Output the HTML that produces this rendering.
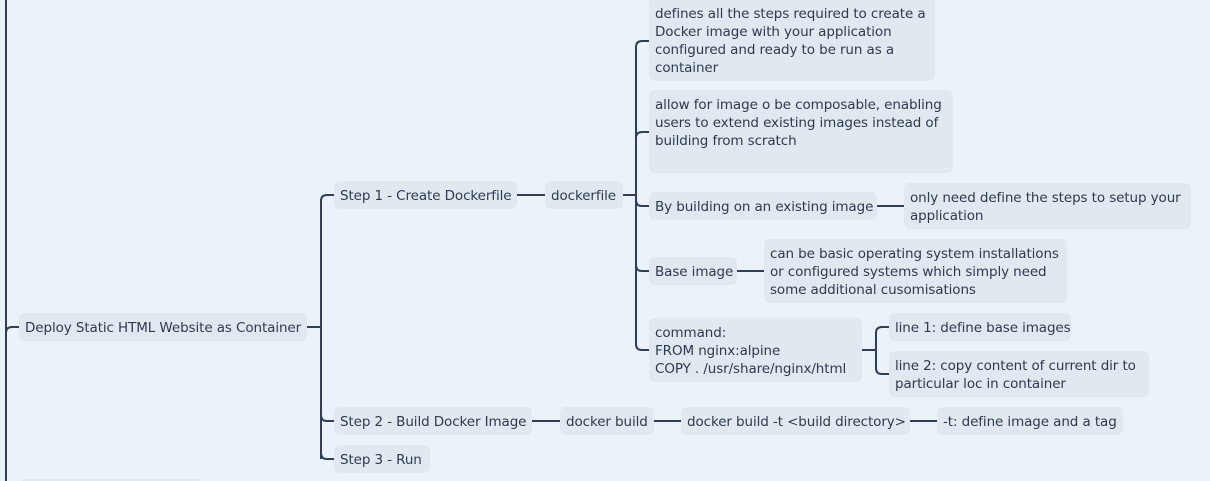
<!DOCTYPE html>
<html><head><meta charset="utf-8"><style>
html,body{margin:0;padding:0;width:1210px;height:481px;overflow:hidden;}
body{background:#ecf2f9;position:relative;font-family:"DejaVu Sans","Liberation Sans",sans-serif;font-size:13.5px;color:#2e3a4e;}
.n{position:absolute;background:#e1e8f0;border-radius:6px;box-sizing:border-box;padding:6px 6px 4px;line-height:18px;white-space:nowrap;letter-spacing:-0.1px;}
svg{position:absolute;left:0;top:0;}
</style></head><body>
<svg width="1210" height="481" fill="none" stroke="#2f3f57" stroke-width="2">
<path d="M6 0 V481"/>
<path d="M6 333 Q6 327 12 327 H19"/>
<path d="M307 327 H321"/>
<path d="M321 459 V201 Q321 195 327 195 H334"/>
<path d="M321 415 Q321 421 327 421 H334"/>
<path d="M321 453 Q321 459 327 459 H334"/>
<path d="M517 195 H545"/>
<path d="M623 195 H636"/>
<path d="M636 344 V47 Q636 41 642 41 H649"/>
<path d="M636 138 Q636 132 642 132 H649"/>
<path d="M636 200 Q636 206 642 206 H649"/>
<path d="M636 265 Q636 271 642 271 H649"/>
<path d="M636 344 Q636 350 642 350 H649"/>
<path d="M877 206 H904"/>
<path d="M737 271 H764"/>
<path d="M862 350 H876"/>
<path d="M876 368 V333 Q876 327 882 327 H889"/>
<path d="M876 368 Q876 374 882 374 H889"/>
<path d="M532 421 H560"/>
<path d="M654 421 H681"/>
<path d="M910 421 H937"/>
</svg>
<div class="n" style="left:19px;top:313px;width:288px;height:28px;">Deploy Static HTML Website as Container</div>
<div class="n" style="left:334px;top:181px;width:183px;height:28px;">Step 1 - Create Dockerfile</div>
<div class="n" style="left:545px;top:181px;width:78px;height:28px;">dockerfile</div>
<div class="n" style="left:649px;top:-2px;width:286px;height:83px;padding-top:7px;">defines all the steps required to create a<br>Docker image with your application<br>configured and ready to be run as a<br>container</div>
<div class="n" style="left:649px;top:90px;width:304px;height:83px;">allow for image o be composable, enabling<br>users to extend existing images instead of<br>building from scratch</div>
<div class="n" style="left:649px;top:192px;width:228px;height:28px;">By building on an existing image</div>
<div class="n" style="left:904px;top:183px;width:287px;height:46px;">only need define the steps to setup your<br>application</div>
<div class="n" style="left:649px;top:257px;width:88px;height:28px;">Base image</div>
<div class="n" style="left:764px;top:239px;width:303px;height:64px;">can be basic operating system installations<br>or configured systems which simply need<br>some additional cusomisations</div>
<div class="n" style="left:649px;top:318px;width:213px;height:64px;">command:<br>FROM nginx:alpine<br>COPY . /usr/share/nginx/html</div>
<div class="n" style="left:889px;top:313px;width:182px;height:28px;">line 1: define base images</div>
<div class="n" style="left:889px;top:351px;width:260px;height:46px;">line 2: copy content of current dir to<br>particular loc in container</div>
<div class="n" style="left:334px;top:407px;width:198px;height:28px;">Step 2 - Build Docker Image</div>
<div class="n" style="left:560px;top:407px;width:94px;height:28px;">docker build</div>
<div class="n" style="left:681px;top:407px;width:229px;height:28px;">docker build -t &lt;build directory&gt;</div>
<div class="n" style="left:937px;top:407px;width:186px;height:28px;">-t: define image and a tag</div>
<div class="n" style="left:334px;top:445px;width:96px;height:28px;">Step 3 - Run</div>
<div class="n" style="left:22px;top:479px;width:178px;height:2px;padding:0;border-radius:2px;"></div>
</body></html>
